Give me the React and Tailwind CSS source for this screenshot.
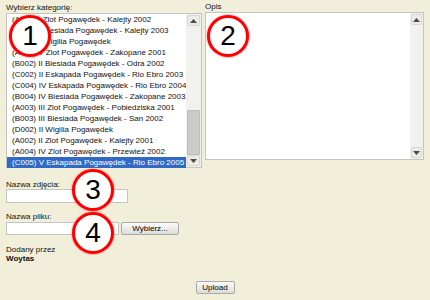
const categories = [
  "(A001) I Zlot Pogawędek - Kalejty 2002",
  "(B001) I Biesiada Pogawędek - Kalejty 2003",
  "(D001) I Wigilia Pogawędek",
  "(A005) V Zlot Pogawędek - Zakopane 2001",
  "(B002) II Biesiada Pogawędek - Odra 2002",
  "(C002) II Eskapada Pogawędek - Rio Ebro 2003",
  "(C004) IV Eskapada Pogawędek - Rio Ebro 2004",
  "(B004) IV Biesiada Pogawędek - Zakopane 2003",
  "(A003) III Zlot Pogawędek - Pobiedziska 2001",
  "(B003) III Biesiada Pogawędek - San 2002",
  "(D002) II Wigilia Pogawędek",
  "(A002) II Zlot Pogawędek - Kalejty 2001",
  "(A004) IV Zlot Pogawędek - Przewież 2002",
  "(C005) V Eskapada Pogawędek - Rio Ebro 2005",
];

const Arrow = ({ down }) => (
  <svg width="7" height="4" viewBox="0 0 7 4">
    <path d={down ? "M0 0h7L3.5 4z" : "M3.5 0L7 4H0z"} fill="#4a4a4a" />
  </svg>
);

const ScrollBtn = ({ down }) => (
  <div className="h-[11px] flex items-center justify-center bg-[#ecebe6] border border-[#d8d8d4] rounded-[1px]">
    <Arrow down={down} />
  </div>
);

const Marker = ({ n, className }) => (
  <div
    className={`absolute w-[42px] h-[42px] rounded-full bg-white border-[3px] border-[#f00] shadow-[0_0_2px_#f55] flex items-center justify-center text-[28px] leading-none text-black ${className}`}
  >
    {n}
  </div>
);

const XpButton = ({ children, className }) => (
  <button
    className={`border border-[#a9a9a9] rounded-[2px] bg-gradient-to-b from-[#fbfbfa] to-[#dcdcd8] text-[8px] leading-none text-black ${className}`}
  >
    {children}
  </button>
);

export default function App() {
  return (
    <div
      className="relative w-[430px] h-[300px] bg-[#f1efd9] text-[8px] text-[#111] px-[6px] pt-[2px]"
      style={{ fontFamily: '"Liberation Sans", Arial, sans-serif' }}
    >
      {/* top row */}
      <div className="flex">
        <div className="w-[196px]">
          <div className="h-[11px] leading-[11px]">Wybierz kategorię:</div>
          <div className="h-[155px] border border-[#c4c4c0] bg-white flex">
            <ul className="flex-1">
              {categories.map((c, i) => (
                <li
                  key={c}
                  className={`h-[11px] leading-[11px] pl-[5px] whitespace-nowrap overflow-hidden ${
                    i === categories.length - 1 ? "bg-[#316ac5] text-white" : ""
                  }`}
                >
                  {c}
                </li>
              ))}
            </ul>
            <div className="w-[17px] bg-[#f1f1ee] flex flex-col p-[1px]">
              <ScrollBtn />
              <div className="flex-1 flex flex-col justify-end">
                <div className="h-[45px] bg-[#cbcbc8] border border-[#bdbdba] rounded-[1px]" />
              </div>
              <ScrollBtn down />
            </div>
          </div>
        </div>

        <div className="ml-[3px] w-[219px]">
          <div className="h-[10px] leading-[10px]">Opis</div>
          <div className="h-[148px] border border-[#c4c4c0] bg-white flex justify-end">
            <div className="w-[13px] bg-[#f1f1ee] flex flex-col justify-between p-[1px]">
              <ScrollBtn />
              <ScrollBtn down />
            </div>
          </div>
        </div>
      </div>

      {/* form fields */}
      <div className="mt-[12px] h-[9px] leading-[9px]">Nazwa zdjęcia:</div>
      <div className="w-[122px] h-[14px] border border-[#c4c4c0] bg-white" />

      <div className="mt-[9px] h-[9px] leading-[9px]">Nazwa pliku:</div>
      <div className="flex items-center gap-[2px] mt-[1px]">
        <div className="w-[113px] h-[13px] border border-[#c4c4c0] bg-white" />
        <XpButton className="w-[58px] h-[13px]">Wybierz...</XpButton>
      </div>

      <div className="mt-[10px] h-[9px] leading-[9px]">Dodany przez</div>
      <div className="h-[9px] leading-[9px] font-bold">Woytas</div>

      <div className="flex justify-center mt-[18px]">
        <XpButton className="w-[39px] h-[13px]">Upload</XpButton>
      </div>

      {/* annotation markers */}
      <Marker n="1" className="left-[9px] top-[15px]" />
      <Marker n="2" className="left-[207px] top-[15px]" />
      <Marker n="3" className="left-[72px] top-[169px]" />
      <Marker n="4" className="left-[72px] top-[212px]" />
    </div>
  );
}
